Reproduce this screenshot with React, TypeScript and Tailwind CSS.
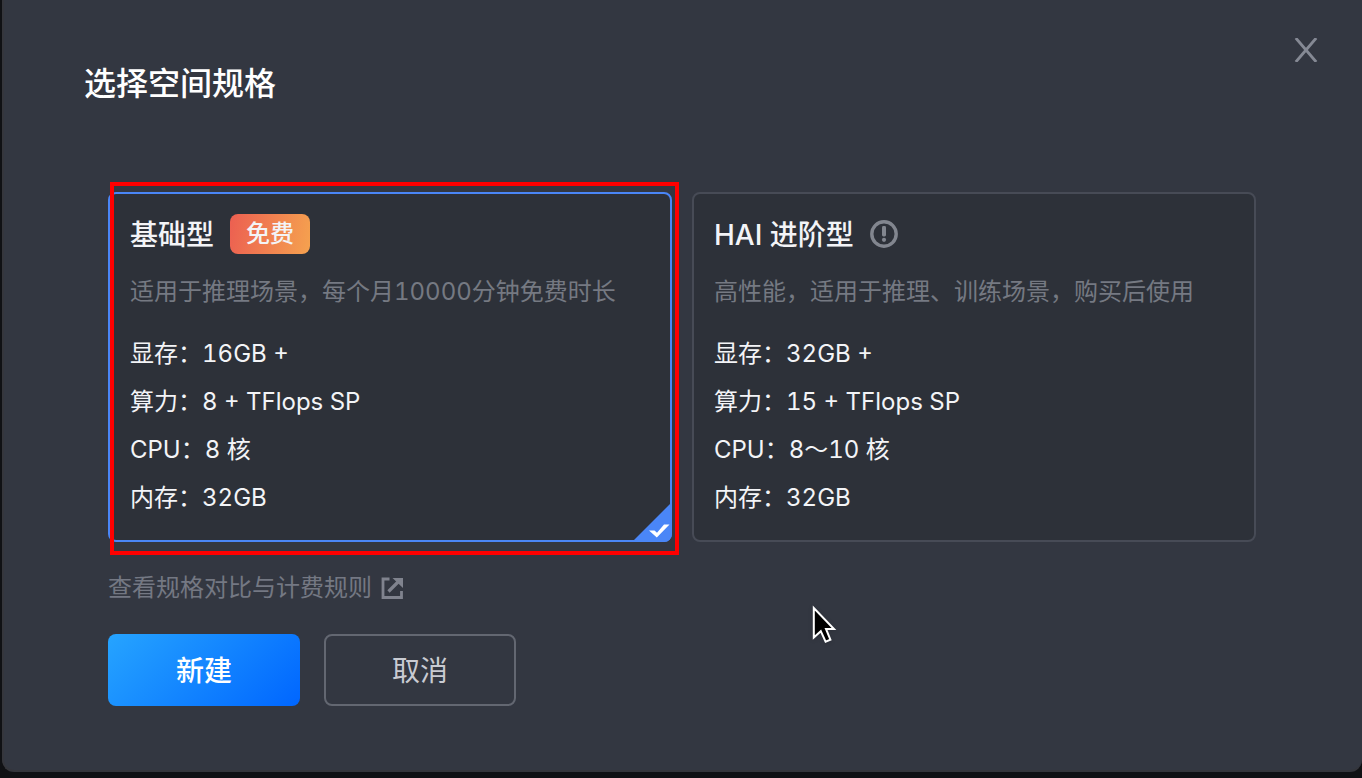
import { useState } from "react";
import type { ReactNode } from "react";

type Spec = { label: string; value: string };

type Plan = {
  id: string;
  name: string;
  description: string;
  badge: ReactNode;
  specs: Spec[];
};

function InfoIcon() {
  return (
    <svg width="28" height="28" viewBox="0 0 28 28" fill="none" aria-hidden="true">
      <circle cx="14" cy="14" r="12.2" stroke="#82868f" strokeWidth="3.4" />
      <rect x="12" y="6" width="4" height="10.5" rx="1.4" fill="#82868f" />
      <circle cx="14" cy="19.8" r="2.1" fill="#82868f" />
    </svg>
  );
}

function ExternalIcon() {
  return (
    <svg width="24" height="24" viewBox="0 0 24 24" fill="none" aria-hidden="true">
      <path d="M9.5 3H3v18.5h18.500V15" stroke="#80838e" strokeWidth="2.800" />
      <path d="M8.500 15.500L18 6" stroke="#80838e" strokeWidth="3.200" />
      <path d="M12.500 2h10.500v10z" fill="#80838e" />
    </svg>
  );
}

function CloseIcon() {
  return (
    <svg width="24" height="24" viewBox="0 0 24 24" fill="none" aria-hidden="true">
      <path d="M1.800 0L22.200 24M22.200 0L1.800 24" stroke="#858994" strokeWidth="2.800" />
    </svg>
  );
}

function SelectedCorner() {
  return (
    <svg
      className="absolute -right-0.5 -bottom-0.5 rounded-br-lg"
      width="40"
      height="40"
      viewBox="0 0 40 40"
      aria-hidden="true"
    >
      <path d="M40 0V40H0z" fill="#4a86f7" />
      <path d="M17 28.500h5.500l2.500 2.300L32 22.500h5.500L24.800 35.500z" fill="#fff" />
    </svg>
  );
}

function Pointer() {
  return (
    <svg
      className="pointer-events-none absolute top-[604px] left-[810px] drop-shadow-sm"
      width="28"
      height="42"
      viewBox="0 0 28 42"
      aria-hidden="true"
    >
      <path
        d="M3.800 4V33.500L10.800 27.200L15.600 37.600L20.400 35.600L16 25H24z"
        fill="#000"
        stroke="#fff"
        strokeWidth="2"
      />
    </svg>
  );
}

const plans: Plan[] = [
  {
    id: "basic",
    name: "基础型",
    description: "适用于推理场景，每个月10000分钟免费时长",
    badge: (
      <span className="flex h-10 w-20 items-center justify-center rounded-lg bg-linear-[100deg] from-[#ec5f51] to-[#f5a24f] text-2xl font-medium">
        免费
      </span>
    ),
    specs: [
      { label: "显存", value: "16GB +" },
      { label: "算力", value: "8 + TFlops SP" },
      { label: "CPU", value: "8 核" },
      { label: "内存", value: "32GB" },
    ],
  },
  {
    id: "hai",
    name: "HAI 进阶型",
    description: "高性能，适用于推理、训练场景，购买后使用",
    badge: <InfoIcon />,
    specs: [
      { label: "显存", value: "32GB +" },
      { label: "算力", value: "15 + TFlops SP" },
      { label: "CPU", value: "8～10 核" },
      { label: "内存", value: "32GB" },
    ],
  },
];

function PlanCard({
  plan,
  selected,
  onSelect,
}: {
  plan: Plan;
  selected: boolean;
  onSelect: () => void;
}) {
  return (
    <label
      className={`relative block flex-1 cursor-pointer rounded-lg border-2 bg-[#2d3139] px-5 pt-5 pb-[18px] text-[#f3f4f7] ${
        selected ? "border-[#4a86f7]" : "border-[#474b56]"
      }`}
    >
      <input
        type="radio"
        name="plan"
        value={plan.id}
        checked={selected}
        onChange={onSelect}
        className="sr-only"
      />
      <span className="flex h-10 items-center gap-4">
        <span className="pt-0.5 text-[28px] leading-10 font-medium">{plan.name}</span>
        {plan.badge}
      </span>
      <span className="mt-5 block text-2xl leading-9 text-[#757982]">{plan.description}</span>
      <span className="mt-5 block text-2xl">
        {plan.specs.map((spec) => (
          <span key={spec.label} className="block leading-12">
            {spec.label}：{spec.value}
          </span>
        ))}
      </span>
      {selected && <SelectedCorner />}
    </label>
  );
}

export default function App() {
  const [selected, setSelected] = useState("basic");

  return (
    <div className="relative min-h-screen bg-[#101114] pb-1.5 pl-0.5 font-['Inter','Noto_Sans_CJK_SC',sans-serif] tabular-nums">
      <main
        role="dialog"
        aria-labelledby="dialog-title"
        className="rounded-b-xl border-b-2 border-l-2 border-[#35363c] bg-[#333741] pb-16"
      >
        <header className="flex items-start justify-between pt-9 pr-11 pl-20">
          <h1 id="dialog-title" className="pt-6 text-[32px] leading-12 font-medium text-white">
            选择空间规格
          </h1>
          <button type="button" aria-label="关闭" className="cursor-pointer pt-0.5">
            <CloseIcon />
          </button>
        </header>

        <form className="mt-[84px] pr-[106px] pl-[104px]" onSubmit={(event) => event.preventDefault()}>
          <div className="relative flex gap-5">
            {plans.map((plan) => (
              <PlanCard
                key={plan.id}
                plan={plan}
                selected={selected === plan.id}
                onSelect={() => setSelected(plan.id)}
              />
            ))}
            <div className="pointer-events-none absolute -top-2.5 right-[577px] -bottom-[13px] left-0.5 border-4 border-[#ff0000]" />
          </div>

          <a
            href="#pricing"
            className="mt-[26px] inline-flex h-10 items-center gap-2 text-2xl text-[#747883]"
          >
            查看规格对比与计费规则
            <ExternalIcon />
          </a>

          <div className="mt-[26px] flex gap-6">
            <button
              type="submit"
              className="h-[72px] w-48 cursor-pointer rounded-lg bg-linear-[135deg] from-[#26a4ff] to-[#0066ff] pt-0.5 text-[28px] font-medium text-white"
            >
              新建
            </button>
            <button
              type="button"
              className="h-[72px] w-48 cursor-pointer rounded-lg border-2 border-[#636771] pt-0.5 text-[28px] text-[#c9cbd2]"
            >
              取消
            </button>
          </div>
        </form>
      </main>
      <Pointer />
    </div>
  );
}
